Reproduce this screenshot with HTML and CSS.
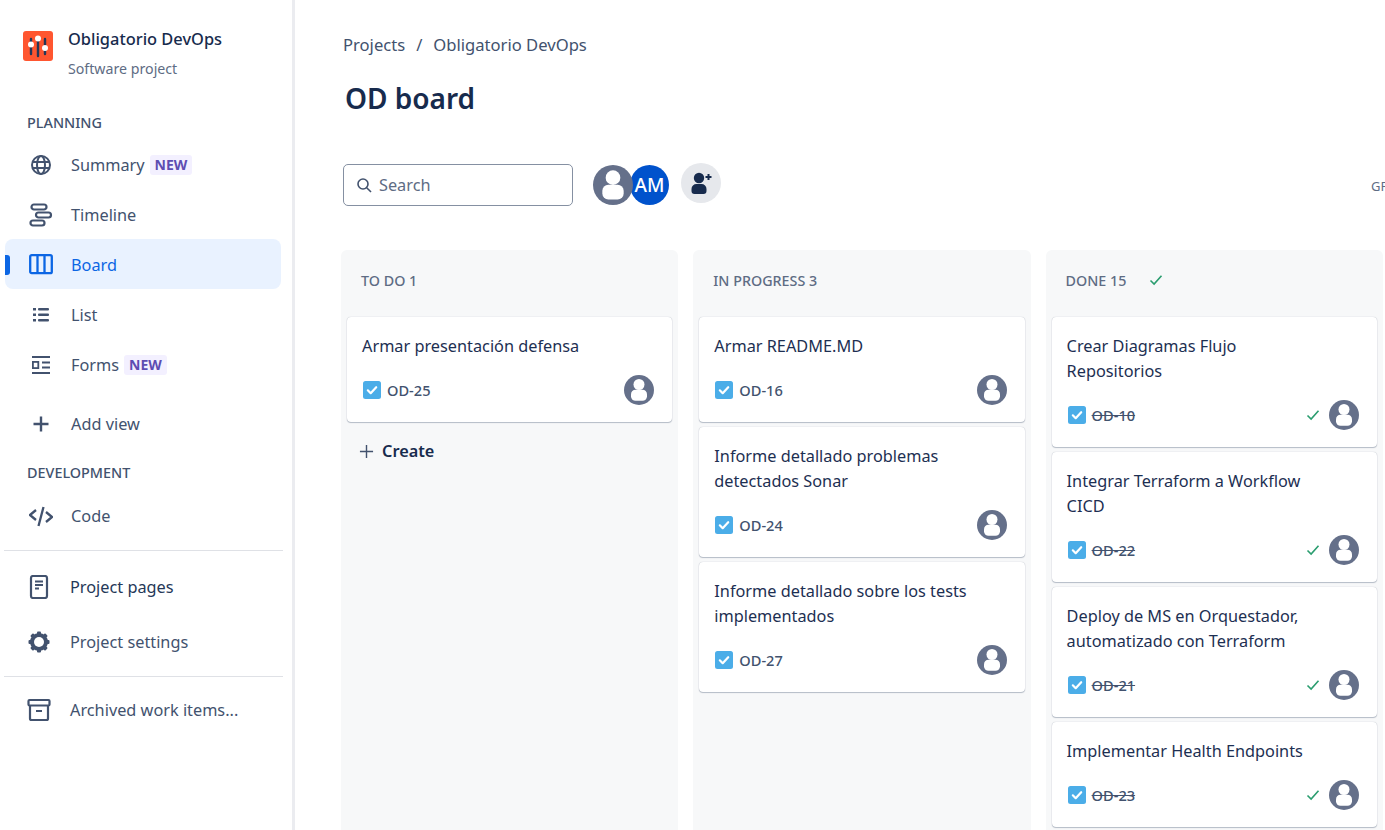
FILE: index.html
```html
<!DOCTYPE html>
<html>
<head>
  <title>OD board</title>
  <link rel="stylesheet" href="styles.css">
</head>
<body>
  <svg class="defs" width="0" height="0">
    <symbol id="user" viewBox="0 0 30 30">
      <circle cx="15" cy="15" r="15" fill="#65708a"/>
      <circle cx="15" cy="9.500" r="5.500" fill="#fff"/>
      <rect x="7" y="14.800" width="16" height="11" rx="4.500" fill="#fff"/>
    </symbol>
    <symbol id="task" viewBox="0 0 18 18">
      <rect width="18" height="18" rx="2.500" fill="#4bade8"/>
      <path d="M4.800 9.300l2.900 2.900 5.500-6" fill="none" stroke="#fff" stroke-width="2.200" stroke-linecap="round" stroke-linejoin="round"/>
    </symbol>
    <symbol id="check" viewBox="0 0 14 12">
      <path d="M1.500 6.500l3.600 3.600 7.400-8.400" fill="none" stroke="#2a9d6f" stroke-width="1.600"/>
    </symbol>
  </svg>

  <!-- Sidebar -->
  <aside class="sidebar">
    <div class="project">
      <svg class="project-logo" viewBox="0 0 30 30">
        <rect width="30" height="30" rx="3" fill="#ff5630"/>
        <path d="M8 8v15M15 8v17M22 8v15" stroke="#253858" stroke-width="2.400" stroke-linecap="round"/>
        <circle cx="8" cy="13.500" r="3" fill="#fff"/>
        <circle cx="15" cy="7.500" r="3" fill="#fff"/>
        <circle cx="22" cy="17" r="3" fill="#fff"/>
      </svg>
      <div>
        <div class="project-name">Obligatorio DevOps</div>
        <div class="project-type">Software project</div>
      </div>
    </div>

    <div class="section-title planning">PLANNING</div>
    <a class="nav-item first">
      <svg class="nav-icon" viewBox="0 0 24 24" fill="none" stroke="#42526e" stroke-width="2"><circle cx="12" cy="12" r="9"/><ellipse cx="12" cy="12" rx="4" ry="9"/><path d="M3 9h18M3 15h18"/></svg>
      <span>Summary</span><span class="badge">NEW</span>
    </a>
    <a class="nav-item">
      <svg class="nav-icon" viewBox="0 0 24 24" fill="none" stroke="#42526e" stroke-width="2.200"><rect x="2.500" y="1.500" width="15" height="5" rx="2.500"/><rect x="7" y="9.500" width="15" height="5" rx="2.500"/><rect x="1.500" y="17.500" width="14" height="5" rx="2.500"/></svg>
      <span>Timeline</span>
    </a>
    <a class="nav-item active">
      <svg class="nav-icon" viewBox="0 0 24 24" fill="none" stroke="#0c66e4" stroke-width="2.300"><rect x="1.200" y="2.200" width="21.600" height="18" rx="1.500"/><path d="M8.500 2.200v18M15.500 2.200v18"/></svg>
      <span>Board</span>
    </a>
    <a class="nav-item">
      <svg class="nav-icon" viewBox="0 0 24 24" fill="#42526e"><rect x="4" y="5" width="3" height="2.500"/><rect x="9" y="5" width="11" height="2.500" rx="1"/><rect x="4" y="10.500" width="3" height="2.500"/><rect x="9" y="10.500" width="11" height="2.500" rx="1"/><rect x="4" y="16" width="3" height="2.500"/><rect x="9" y="16" width="11" height="2.500" rx="1"/></svg>
      <span>List</span>
    </a>
    <a class="nav-item">
      <svg class="nav-icon" viewBox="0 0 24 24" fill="none" stroke="#42526e" stroke-width="1.800"><path d="M3 4h18M3 20h18M13 9.500h8M13 14.500h8"/><rect x="3.900" y="8.900" width="5.400" height="6.200"/></svg>
      <span>Forms</span><span class="badge">NEW</span>
    </a>
    <a class="nav-item add-view">
      <svg class="nav-icon" viewBox="0 0 24 24" fill="none" stroke="#42526e" stroke-width="2.400"><path d="M12 4.500v15M4.500 12h15"/></svg>
      <span>Add view</span>
    </a>

    <div class="section-title development">DEVELOPMENT</div>
    <a class="nav-item code">
      <svg class="nav-icon" viewBox="0 0 24 24" fill="none" stroke="#42526e" stroke-width="2.300"><path d="M7 6l-6 5 6 5M17 8l6 5-6 5M14.500 3l-5 19"/></svg>
      <span>Code</span>
    </a>

    <hr class="divider">
    <a class="nav-item dark">
      <svg class="nav-icon" viewBox="0 0 24 24" fill="none" stroke="#42526e" stroke-width="2.200"><rect x="4" y="1" width="16" height="22" rx="2"/><path d="M8 6.500h8M8 10h8M8 13.500h4"/></svg>
      <span>Project pages</span>
    </a>
    <a class="nav-item settings">
      <svg class="nav-icon" viewBox="0 0 24 24" fill="#42526e">
        <circle cx="12" cy="12" r="7" fill="none" stroke="#42526e" stroke-width="4"/>
        <rect x="10" y="1.500" width="4" height="21" rx="1"/>
        <rect x="10" y="1.500" width="4" height="21" rx="1" transform="rotate(45 12 12)"/>
        <rect x="10" y="1.500" width="4" height="21" rx="1" transform="rotate(90 12 12)"/>
        <rect x="10" y="1.500" width="4" height="21" rx="1" transform="rotate(135 12 12)"/>
        <circle cx="12" cy="12" r="5" fill="#fff"/>
      </svg>
      <span>Project settings</span>
    </a>
    <hr class="divider second">
    <a class="nav-item archived">
      <svg class="nav-icon" viewBox="0 0 24 24" fill="none" stroke="#42526e" stroke-width="2.200"><rect x="1.500" y="2" width="21" height="5.500" rx="1"/><path d="M3 7.500v13a1.500 1.500 0 0 0 1.500 1.500h15a1.500 1.500 0 0 0 1.500-1.500v-13M9 13h6"/></svg>
      <span>Archived work items...</span>
    </a>
  </aside>

  <!-- Board -->
  <main class="main">
    <div class="breadcrumbs"><span>Projects</span><span class="slash">/</span><span>Obligatorio DevOps</span></div>
    <h1>OD board</h1>

    <div class="toolbar">
      <div class="search">
        <svg class="search-icon" viewBox="0 0 16 16" fill="none" stroke="#42526e" stroke-width="1.600"><circle cx="7" cy="7" r="5"/><path d="M10.700 10.700L15 15"/></svg>
        <span>Search</span>
      </div>
      <div class="avatars">
        <svg class="avatar-big"><use href="#user"/></svg>
        <div class="avatar-am">AM</div>
      </div>
      <div class="add-people">
        <svg viewBox="0 0 24 24" fill="#172b4d"><circle cx="10" cy="7" r="5.200"/><path d="M2.500 18a5 5 0 0 1 5-5h5a5 5 0 0 1 5 5v2a3 3 0 0 1-3 3h-9a3 3 0 0 1-3-3z"/><path d="M16.500 6h6M19.500 3v6" stroke="#172b4d" stroke-width="2" fill="none"/></svg>
      </div>
      <div class="group-by">GF</div>
    </div>

    <div class="columns">
      <section class="column">
        <div class="column-title">TO DO 1</div>
        <article class="card">
          <div class="card-title">Armar presentación defensa</div>
          <div class="card-foot">
            <svg class="task-icon"><use href="#task"/></svg><span class="key">OD-25</span>
            <svg class="card-avatar"><use href="#user"/></svg>
          </div>
        </article>
        <div class="create">
          <svg viewBox="0 0 16 16" fill="none" stroke="#42526e" stroke-width="1.500"><path d="M8 1v14M1 8h14"/></svg>
          <span>Create</span>
        </div>
      </section>

      <section class="column">
        <div class="column-title">IN PROGRESS 3</div>
        <article class="card">
          <div class="card-title">Armar README.MD</div>
          <div class="card-foot">
            <svg class="task-icon"><use href="#task"/></svg><span class="key">OD-16</span>
            <svg class="card-avatar"><use href="#user"/></svg>
          </div>
        </article>
        <article class="card">
          <div class="card-title">Informe detallado problemas detectados Sonar</div>
          <div class="card-foot">
            <svg class="task-icon"><use href="#task"/></svg><span class="key">OD-24</span>
            <svg class="card-avatar"><use href="#user"/></svg>
          </div>
        </article>
        <article class="card">
          <div class="card-title">Informe detallado sobre los tests implementados</div>
          <div class="card-foot">
            <svg class="task-icon"><use href="#task"/></svg><span class="key">OD-27</span>
            <svg class="card-avatar"><use href="#user"/></svg>
          </div>
        </article>
      </section>

      <section class="column">
        <div class="column-title">DONE 15<svg class="done-check"><use href="#check"/></svg></div>
        <article class="card">
          <div class="card-title">Crear Diagramas Flujo Repositorios</div>
          <div class="card-foot">
            <svg class="task-icon"><use href="#task"/></svg><span class="key done">OD-10</span>
            <svg class="card-check"><use href="#check"/></svg>
            <svg class="card-avatar"><use href="#user"/></svg>
          </div>
        </article>
        <article class="card">
          <div class="card-title">Integrar Terraform a Workflow CICD</div>
          <div class="card-foot">
            <svg class="task-icon"><use href="#task"/></svg><span class="key done">OD-22</span>
            <svg class="card-check"><use href="#check"/></svg>
            <svg class="card-avatar"><use href="#user"/></svg>
          </div>
        </article>
        <article class="card">
          <div class="card-title">Deploy de MS en Orquestador, automatizado con Terraform</div>
          <div class="card-foot">
            <svg class="task-icon"><use href="#task"/></svg><span class="key done">OD-21</span>
            <svg class="card-check"><use href="#check"/></svg>
            <svg class="card-avatar"><use href="#user"/></svg>
          </div>
        </article>
        <article class="card">
          <div class="card-title">Implementar Health Endpoints</div>
          <div class="card-foot">
            <svg class="task-icon"><use href="#task"/></svg><span class="key done">OD-23</span>
            <svg class="card-check"><use href="#check"/></svg>
            <svg class="card-avatar"><use href="#user"/></svg>
          </div>
        </article>
      </section>
    </div>
  </main>
</body>
</html>
```

FILE: styles.css
```css
* {
  box-sizing: border-box;
}

body {
  display: flex;
  height: 100vh;
  margin: 0;
  overflow: hidden;
  background-color: white;
  color: #172b4d;
  font-family: "Noto Sans", "Open Sans", sans-serif;
}

.defs {
  position: absolute;
}

/* Sidebar */
.sidebar {
  flex: none;
  width: 295px;
  height: 100%;
  padding: 0 11px 0 5px;
  border-right: 3px solid #ebecf0;
}

.project {
  display: flex;
  gap: 15px;
  height: 114px;
  padding: 31px 0 0 18px;
}

.project-logo {
  width: 30px;
  height: 30px;
}

.project-name {
  margin-top: -3px;
  font-size: 16.400px;
  font-weight: 500;
  line-height: 22px;
}

.project-type {
  margin-top: 10px;
  color: #5e6c84;
  font-size: 14.200px;
  line-height: 18px;
}

.section-title {
  padding-left: 22px;
  color: #42526e;
  font-size: 14.400px;
  font-weight: 500;
  line-height: 18px;
}

.development {
  margin-top: 16px;
}

.nav-item {
  display: flex;
  align-items: center;
  position: relative;
  height: 50px;
  padding: 2px 0 0 24px;
  color: #42526e;
  font-size: 16.300px;
}

.nav-item.first {
  margin-top: 7px;
}

.nav-icon {
  flex: none;
  width: 24px;
  height: 24px;
  margin-right: 18px;
}

.nav-item.active {
  border-radius: 8px;
  background-color: #e9f2ff;
  color: #0c66e4;
}

.nav-item.active::before {
  content: "";
  position: absolute;
  left: 0;
  top: 16px;
  width: 5px;
  height: 20px;
  border-radius: 0 3px 3px 0;
  background-color: #0c66e4;
}

.badge {
  margin-left: 5px;
  padding: 0 5px;
  border-radius: 3px;
  background-color: #f3f0ff;
  color: #5e4db2;
  font-size: 14px;
  font-weight: 700;
  line-height: 20px;
}

.add-view {
  margin: 9px 0 0;
}

.code {
  margin-top: 11px;
  height: 44px;
}

.divider {
  height: 1px;
  margin: 13px -2px 0 -1px;
  border: 0;
  background-color: #dfe1e6;
}

.dark {
  height: 55px;
  margin-top: 7px;
  padding-left: 22px;
  color: #253858;
}

.settings {
  height: 55px;
  padding-left: 22px;
}

.dark .nav-icon,
.settings .nav-icon,
.archived .nav-icon {
  margin-right: 19px;
}

.second {
  margin-top: 8px;
}

.archived {
  height: 64px;
  padding-left: 22px;
}

/* Main */
.main {
  flex: 1;
  min-width: 0;
  padding: 32px 0 0 46px;
  overflow: hidden;
}

.breadcrumbs {
  display: flex;
  gap: 11px;
  padding-left: 2px;
  color: #42526e;
  font-size: 16.600px;
  line-height: 26px;
}

h1 {
  margin: 20px 0 0 4px;
  font-size: 28px;
  font-weight: 600;
  line-height: 40px;
}

.toolbar {
  display: flex;
  align-items: flex-start;
  height: 86px;
  margin-top: 46px;
  padding-left: 2px;
}

.toolbar > * {
  flex: none;
}

.search {
  display: flex;
  align-items: center;
  gap: 7px;
  width: 230px;
  height: 42px;
  padding-left: 12px;
  border: 1px solid #8590a2;
  border-radius: 5px;
  color: #5e6c84;
  font-size: 16.300px;
}

.search-icon {
  width: 16px;
  height: 16px;
}

.avatars {
  display: flex;
  margin: 1px 0 0 20px;
}

.avatar-big {
  position: relative;
  z-index: 1;
  width: 40px;
  height: 40px;
}

.avatar-am {
  width: 39px;
  height: 40px;
  margin-left: -3px;
  border-radius: 50%;
  background-color: #0052cc;
  color: white;
  font-size: 19px;
  font-weight: 500;
  line-height: 40px;
  text-align: center;
}

.add-people {
  display: flex;
  align-items: center;
  justify-content: center;
  width: 40px;
  height: 40px;
  margin: -1px 0 0 12px;
  border-radius: 50%;
  background-color: #e6e8ec;
}

.add-people svg {
  width: 24px;
  height: 24px;
}

.group-by {
  margin: 13px 0 0 650px;
  color: #5e6c84;
  font-size: 13px;
}

/* Columns */
.columns {
  display: flex;
  gap: 15px;
  height: 600px;
}

.column {
  flex: none;
  width: 337.300px;
  padding: 0 6px;
  border-radius: 6px 6px 0 0;
  background-color: #f7f8f9;
}

.column-title {
  display: flex;
  align-items: center;
  height: 67px;
  padding: 0 0 7px 14px;
  color: #5e6c84;
  font-size: 14.300px;
  font-weight: 500;
}

.done-check {
  width: 14px;
  height: 12px;
  margin-left: 23px;
}

.card {
  margin-bottom: 5px;
  padding: 17px 18px 17px 15px;
  border-radius: 4px;
  background-color: white;
  box-shadow: 0 1px 1px rgba(9, 30, 66, 0.25), 0 0 1px rgba(9, 30, 66, 0.31);
}

.card-title {
  max-width: 262px;
  color: #1d2f52;
  font-size: 16.300px;
  line-height: 25px;
}

.card-foot {
  display: flex;
  align-items: center;
  height: 30px;
  margin-top: 16px;
}

.task-icon {
  width: 18px;
  height: 18px;
  margin: 0 6px 0 1px;
}

.key {
  margin-right: auto;
  color: #42526e;
  font-size: 14.600px;
  font-weight: 500;
}

.key.done {
  text-decoration: line-through;
}

.card-check {
  width: 14px;
  height: 12px;
  margin-right: 9px;
}

.card-avatar {
  width: 30px;
  height: 30px;
}

.create {
  display: flex;
  align-items: center;
  gap: 8px;
  padding: 13px 0 0 12px;
  font-size: 16.300px;
  font-weight: 600;
}

.create svg {
  width: 15px;
  height: 15px;
}
```
